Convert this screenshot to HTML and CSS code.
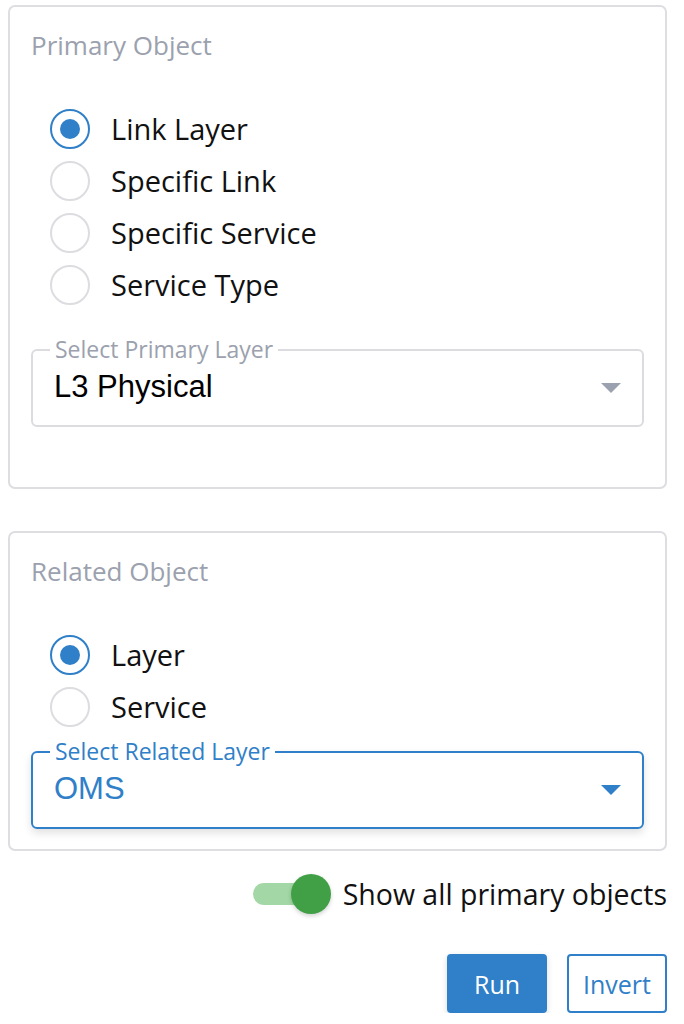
FILE: index.html
```html
<!DOCTYPE html>
<html>
<head>
<meta charset="utf-8">
<link rel="stylesheet" href="styles.css">
</head>
<body>
<div class="page">
  <section class="card card-primary">
    <h2 class="card-title">Primary Object</h2>
    <div class="radio-group">
      <label class="radio"><span class="dot checked"></span><span class="radio-label">Link Layer</span></label>
      <label class="radio"><span class="dot"></span><span class="radio-label">Specific Link</span></label>
      <label class="radio"><span class="dot"></span><span class="radio-label">Specific Service</span></label>
      <label class="radio"><span class="dot"></span><span class="radio-label">Service Type</span></label>
    </div>
    <div class="select">
      <span class="select-legend">Select Primary Layer</span>
      <span class="select-value">L3 Physical</span>
      <span class="caret"></span>
    </div>
  </section>

  <section class="card card-related">
    <h2 class="card-title">Related Object</h2>
    <div class="radio-group">
      <label class="radio"><span class="dot checked"></span><span class="radio-label">Layer</span></label>
      <label class="radio"><span class="dot"></span><span class="radio-label">Service</span></label>
    </div>
    <div class="select focused">
      <span class="select-legend">Select Related Layer</span>
      <span class="select-value">OMS</span>
      <span class="caret"></span>
    </div>
  </section>

  <div class="toggle-row">
    <span class="switch"><span class="track"></span><span class="thumb"></span></span>
    <span class="toggle-label">Show all primary objects</span>
  </div>

  <div class="actions">
    <button class="btn btn-primary">Run</button>
    <button class="btn btn-outline">Invert</button>
  </div>
</div>
</body>
</html>
```

FILE: styles.css
```css
* { box-sizing: border-box; }
html, body { margin: 0; padding: 0; background: #fff; }
body { font-family: "Open Sans", "Noto Sans", sans-serif; color: #111; }

.page {
  width: 684px;
  padding: 5px 17px 0 8px;
}

.card {
  border: 2px solid #dedee2;
  border-radius: 7px;
  padding: 22px 21px 0 21px;
}
.card-primary { padding-bottom: 60px; }
.card-related { margin-top: 42px; padding-bottom: 20px; }

.card-title {
  margin: 0;
  font-size: 26px;
  line-height: 32px;
  font-weight: 400;
  color: #9ba1ae;
}

.radio-group {
  display: flex;
  flex-direction: column;
  margin-top: 42px;
  padding-left: 19px;
}

.radio {
  display: flex;
  align-items: center;
  height: 52px;
  gap: 21px;
}
.dot {
  width: 40px;
  height: 40px;
  border-radius: 50%;
  border: 2px solid #dddde1;
  display: flex;
  align-items: center;
  justify-content: center;
  flex: none;
}
.dot.checked { border-color: #2f80c8; }
.dot.checked::after {
  content: "";
  width: 20px;
  height: 20px;
  border-radius: 50%;
  background: #2f80c8;
}
.radio-label { font-size: 29px; line-height: 36px; color: #111; }

.select {
  position: relative;
  margin-top: 38px;
  height: 78px;
  border: 2px solid #dcdce0;
  border-radius: 6px;
  display: flex;
  align-items: center;
  padding: 0 20px 0 21px;
}
.card-related .select { margin-top: 18px; }
.select.focused {
  border-color: #2f80c8;
  box-shadow: 0 4px 8px rgba(0,0,0,0.12);
}
.select-legend {
  position: absolute;
  left: 17px;
  top: -17px;
  padding: 0 5px;
  background: #fff;
  font-size: 23px;
  line-height: 30px;
  color: #9ba1ae;
}
.focused .select-legend { color: #2f80c8; }
.select-value {
  flex: 1;
  font-family: "Liberation Sans", Arial, sans-serif;
  font-size: 31px;
  line-height: 36px;
  color: #000;
  margin-top: -2px;
}
.focused .select-value { color: #2f80c8; }
.caret {
  width: 0;
  height: 0;
  border-left: 10px solid transparent;
  border-right: 10px solid transparent;
  border-top: 10px solid #9ba1ae;
  margin-right: 1px;
}
.focused .caret { border-top-color: #2f80c8; }

.toggle-row {
  display: flex;
  justify-content: flex-end;
  align-items: center;
  margin-top: 22px;
  height: 42px;
  gap: 12px;
}
.switch {
  position: relative;
  width: 78px;
  height: 42px;
  display: flex;
  align-items: center;
}
.track {
  width: 72px;
  height: 22px;
  border-radius: 11px;
  background: #a3d7a5;
}
.thumb {
  position: absolute;
  right: 0;
  top: 1px;
  width: 40px;
  height: 40px;
  border-radius: 50%;
  background: #41a046;
  box-shadow: 0 2px 4px rgba(0,0,0,0.18);
}
.toggle-label { font-size: 28.5px; line-height: 36px; color: #111; }

.actions {
  display: flex;
  justify-content: flex-end;
  gap: 20px;
  margin-top: 39px;
}
.btn {
  font-family: "Open Sans", "Noto Sans", sans-serif;
  font-size: 25px;
  height: 59px;
  padding: 0;
  width: 100px;
  border-radius: 4px;
  cursor: pointer;
}
.btn-primary {
  background: #2f80c8;
  color: #fff;
  border: 2px solid #2f80c8;
  box-shadow: 0 2px 6px rgba(0,0,0,0.15);
}
.btn-outline {
  background: #fff;
  color: #2f80c8;
  border: 2px solid #2f80c8;
}
```
